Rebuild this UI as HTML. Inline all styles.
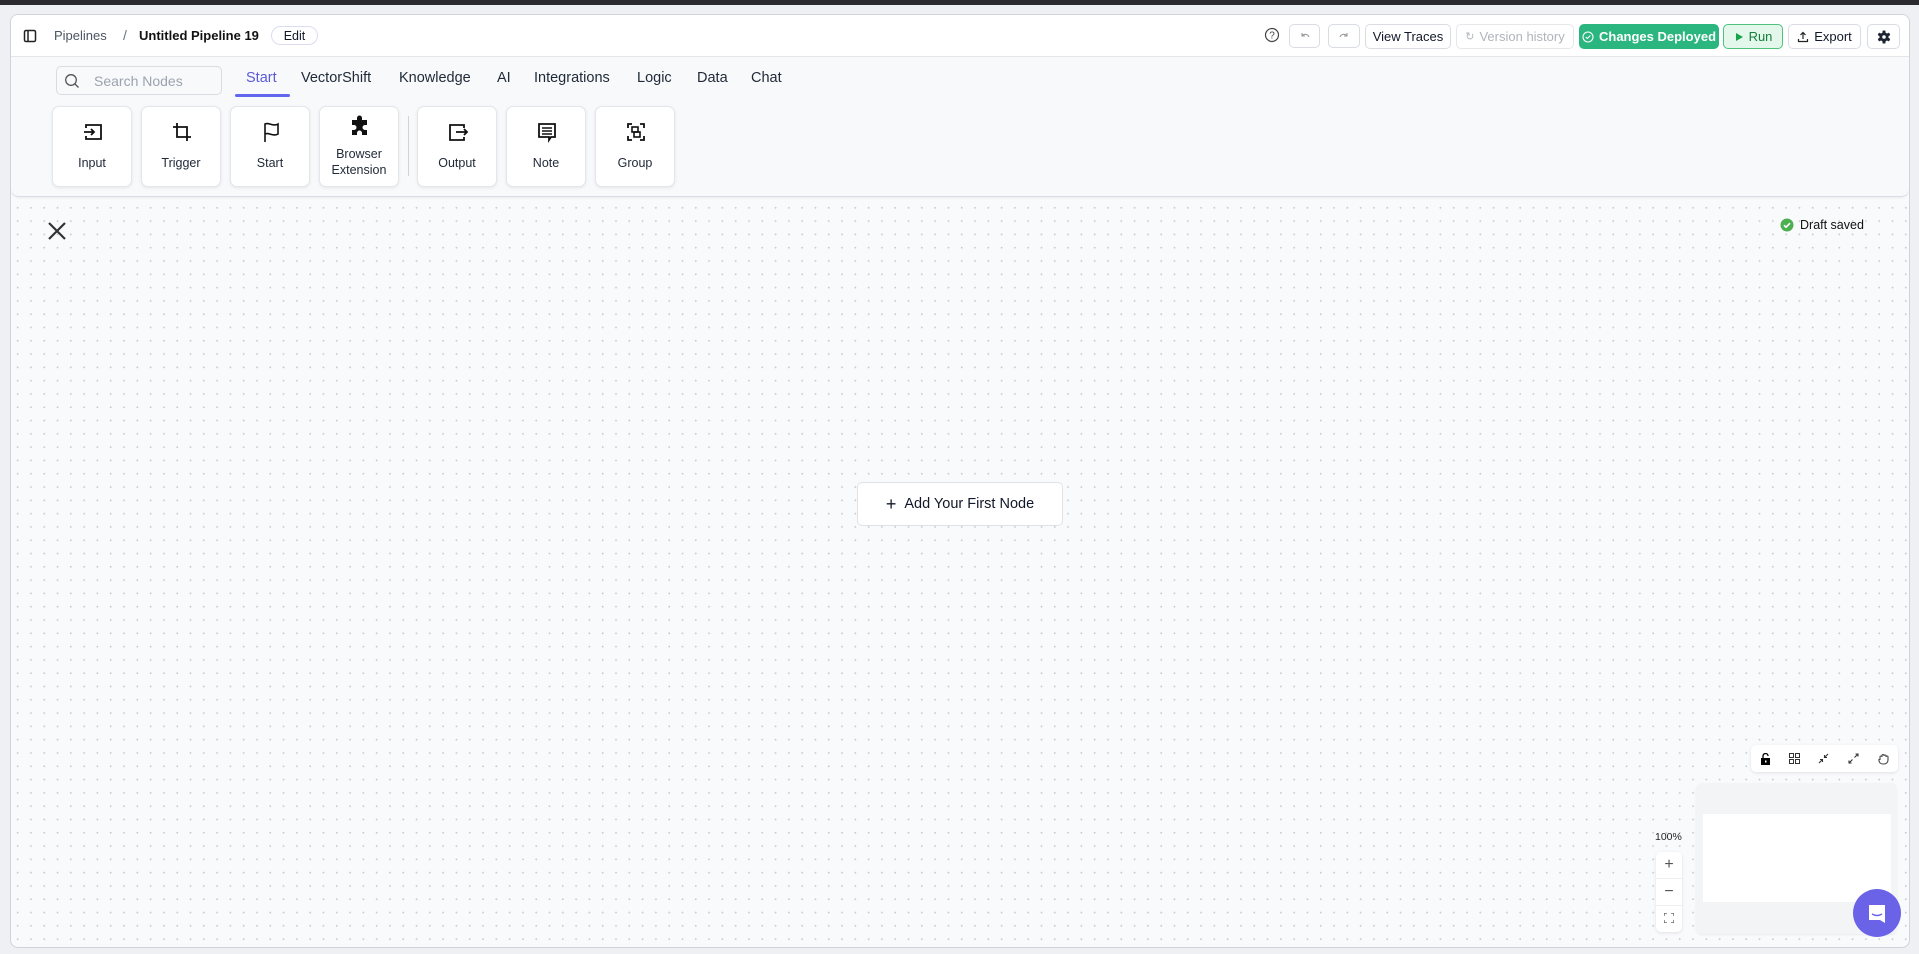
<!DOCTYPE html>
<html><head><meta charset="utf-8"><style>
*{box-sizing:border-box;margin:0;padding:0}
body{width:1919px;height:954px;background:#eef0f3;font-family:"Liberation Sans",sans-serif;color:#111827;position:relative;overflow:hidden;font-size:13px}
.top{position:absolute;left:0;top:0;width:1919px;height:5px;background:#2b2b2f}
.panel{position:absolute;left:10px;top:14px;width:1900px;height:934px;border:1px solid #cfd4dc;border-radius:8px;background-color:#f9fafb;background-image:radial-gradient(#c9ccd2 0.9px,transparent 1.1px);background-size:13.3px 13.3px;overflow:hidden}
.hdr{position:absolute;left:0;top:0;width:100%;height:42px;background:#fff;border-bottom:1px solid #e5e7eb}
.tb{position:absolute;left:0;top:42px;width:100%;height:140px;background:#f8f9fb;border-bottom:1px solid #d9dde3;border-radius:0 0 8px 8px;box-shadow:0 1px 2px rgba(0,0,0,.06)}
.a{position:absolute;white-space:nowrap}
.btn{position:absolute;height:24px;border:1px solid #d9dde3;border-radius:5px;background:#fff;font-size:13px;display:flex;align-items:center;justify-content:center;gap:5px}
.tab{position:absolute;top:13px;font-size:14.5px;color:#1f2937}
.tile{position:absolute;top:49px;width:80px;height:81px;background:#fff;border:1px solid #e3e6ea;border-radius:7px;box-shadow:0 1px 3px rgba(0,0,0,.08);text-align:center;font-size:12.5px;color:#1f2937}
.tile svg{position:absolute;left:29px;top:14px}
.tile span{position:absolute;left:0;right:0;top:48px;line-height:16px}
</style></head><body>
<div class="top"></div>
<div class="panel">
 <div class="hdr">
  <svg class="a" style="left:12px;top:14px" width="14" height="14" viewBox="0 0 14 14"><rect x="1.5" y="1.5" width="11" height="11" rx="1.5" fill="none" stroke="#222" stroke-width="1.5"/><line x1="5" y1="2" x2="5" y2="12" stroke="#222" stroke-width="1.5"/></svg>
  <div class="a" style="left:43px;top:13px;font-size:13px;color:#4b5563">Pipelines</div>
  <div class="a" style="left:112px;top:12px;font-size:14px;color:#6b7280">/</div>
  <div class="a" style="left:128px;top:13px;font-size:13px;font-weight:bold;color:#111">Untitled Pipeline 19</div>
  <div class="btn" style="left:260px;top:11px;width:47px;height:19px;border-radius:10px;border-color:#dcdcf0;font-size:12.5px">Edit</div>
  <svg class="a" style="left:1253px;top:12px" width="16" height="16" viewBox="0 0 16 16"><circle cx="8" cy="8" r="6.5" fill="none" stroke="#444" stroke-width="1.2"/><text x="8" y="11.5" font-size="10" text-anchor="middle" fill="#444" font-family="Liberation Sans">?</text></svg>
  <div class="btn" style="left:1278px;top:9px;width:31px;height:24px">
   <svg width="12" height="12" viewBox="0 0 12 12"><path d="M3 3v3h3M3 6a4 4 0 0 1 7 1" fill="none" stroke="#999" stroke-width="1.1"/></svg></div>
  <div class="btn" style="left:1317px;top:9px;width:32px;height:24px">
   <svg width="12" height="12" viewBox="0 0 12 12"><path d="M9 3v3H6M9 6a4 4 0 0 0-7 1" fill="none" stroke="#999" stroke-width="1.1"/></svg></div>
  <div class="btn" style="left:1354px;top:9px;width:86px;height:25px;font-size:13px">View Traces</div>
  <div class="btn" style="left:1445px;top:9px;width:118px;height:25px;color:#b0b4bb;border-color:#e5e7eb"><span style="font-size:11px">↻</span>Version history</div>
  <div class="btn" style="left:1568px;top:9px;width:140px;height:25px;background:#2bb67f;border-color:#2bb67f;color:#fff;font-weight:bold"><svg width="12" height="12" viewBox="0 0 12 12"><circle cx="6" cy="6" r="5" fill="none" stroke="#fff" stroke-width="1.1"/><path d="M3.8 6l1.5 1.5 3-3" fill="none" stroke="#fff" stroke-width="1.1"/></svg>Changes Deployed</div>
  <div class="btn" style="left:1712px;top:9px;width:60px;height:25px;background:#e3f8ea;border-color:#4cc27a;color:#15803d"><svg width="10" height="10" viewBox="0 0 10 10"><path d="M2 1l7 4-7 4z" fill="#16a34a"/></svg>Run</div>
  <div class="btn" style="left:1777px;top:9px;width:73px;height:25px"><svg width="12" height="12" viewBox="0 0 12 12"><path d="M6 8V1.5M3.5 4L6 1.5 8.5 4M1.5 8v2.5h9V8" fill="none" stroke="#222" stroke-width="1.2"/></svg>Export</div>
  <div class="btn" style="left:1856px;top:9px;width:33px;height:25px"><svg width="14" height="14" viewBox="0 0 14 14"><g fill="#1f2433"><rect x="5.5" y="0.5" width="3" height="13" rx="0.8"/><rect x="5.5" y="0.5" width="3" height="13" rx="0.8" transform="rotate(60 7 7)"/><rect x="5.5" y="0.5" width="3" height="13" rx="0.8" transform="rotate(120 7 7)"/><circle cx="7" cy="7" r="4.6"/></g><circle cx="7" cy="7" r="1.8" fill="#fff"/></svg></div>
 </div>
 <div class="tb">
  <div class="a" style="left:45px;top:9px;width:166px;height:29px;border:1px solid #d9dde3;border-radius:5px;background:#f8f9fb"></div>
  <svg class="a" style="left:53px;top:16px" width="16" height="16" viewBox="0 0 16 16"><circle cx="7" cy="7" r="5.3" fill="none" stroke="#555" stroke-width="1.3"/><line x1="11" y1="11" x2="14.5" y2="14.5" stroke="#555" stroke-width="1.3"/></svg>
  <div class="a" style="left:83px;top:16px;font-size:14px;color:#9ca3af">Search Nodes</div>
  <div class="tab" style="left:235px;color:#5b5bd6">Start</div>
  <div class="a" style="left:224px;top:37px;width:55px;height:3px;background:#6366f1;border-radius:2px"></div>
  <div class="tab" style="left:290px">VectorShift</div>
  <div class="tab" style="left:388px">Knowledge</div>
  <div class="tab" style="left:486px">AI</div>
  <div class="tab" style="left:523px">Integrations</div>
  <div class="tab" style="left:626px">Logic</div>
  <div class="tab" style="left:686px">Data</div>
  <div class="tab" style="left:740px">Chat</div>
  <div class="tile" style="left:41px"><svg width="22" height="22" viewBox="0 0 22 22"><path d="M4 7V4h15v14H4v-3" fill="none" stroke="#111" stroke-width="1.8"/><path d="M2 11h10M9 8l3 3-3 3" fill="none" stroke="#111" stroke-width="1.8"/></svg><span>Input</span></div>
  <div class="tile" style="left:130px"><svg width="22" height="22" viewBox="0 0 22 22"><path d="M6 2v14h14M2 6h14v14" fill="none" stroke="#111" stroke-width="1.8"/></svg><span>Trigger</span></div>
  <div class="tile" style="left:219px"><svg width="22" height="22" viewBox="0 0 22 22"><path d="M5 21V3c4-2 8 3 13 0v10c-5 3-9-2-13 0" fill="none" stroke="#111" stroke-width="1.6"/></svg><span>Start</span></div>
  <div class="tile" style="left:308px"><svg style="top:8px" width="22" height="22" viewBox="0 0 22 22"><path d="M8 3a2.5 2.5 0 0 1 5 0v2h5v5h-2a2.5 2.5 0 0 0 0 5h2v5h-5v-2a2.5 2.5 0 0 0-5 0v2H3v-5h2a2.5 2.5 0 0 0 0-5H3V5h5z" fill="#111"/></svg><span style="top:39px">Browser<br>Extension</span></div>
  <div class="a" style="left:397px;top:59px;width:1px;height:60px;background:#d1d5db"></div>
  <div class="tile" style="left:406px"><svg width="22" height="22" viewBox="0 0 22 22"><path d="M17 7V4H3v15h14v-3" fill="none" stroke="#111" stroke-width="1.8"/><path d="M9 11h11M17 8l3 3-3 3" fill="none" stroke="#111" stroke-width="1.8"/></svg><span>Output</span></div>
  <div class="tile" style="left:495px"><svg width="22" height="22" viewBox="0 0 22 22"><path d="M3 3h16v13h-4l-2 3v-3H3z" fill="none" stroke="#111" stroke-width="1.8"/><path d="M6 7h10M6 10h10M6 13h10" stroke="#111" stroke-width="1.5"/></svg><span>Note</span></div>
  <div class="tile" style="left:584px"><svg width="22" height="22" viewBox="0 0 22 22"><path d="M3 7V3h4M15 3h4v4M19 15v4h-4M7 19H3v-4" fill="none" stroke="#111" stroke-width="1.8"/><rect x="7" y="6" width="6" height="5" fill="none" stroke="#111" stroke-width="1.6"/><rect x="9" y="11" width="6" height="5" fill="none" stroke="#111" stroke-width="1.6"/></svg><span>Group</span></div>
 </div>
 <svg class="a" style="left:36px;top:206px" width="20" height="20" viewBox="0 0 20 20"><path d="M2 2l16 16M18 2L2 18" stroke="#333" stroke-width="2.2"/></svg>
 <svg class="a" style="left:1769px;top:203px" width="14" height="14" viewBox="0 0 14 14"><circle cx="7" cy="7" r="6.5" fill="#4caf50"/><path d="M4 7.2l2 2 4-4" fill="none" stroke="#fff" stroke-width="1.6"/></svg>
 <div class="a" style="left:1789px;top:203px;font-size:12.5px;color:#111">Draft saved</div>
 <div class="a" style="left:846px;top:467px;width:206px;height:44px;background:#fff;border:1px solid #dfe2e6;border-radius:5px;display:flex;align-items:center;justify-content:center;font-size:14.5px;gap:8px"><span style="font-size:18px;font-weight:300">+</span>Add Your First Node</div>
 <div class="a" style="left:1740px;top:730px;width:147px;height:27px;background:#fff;border-radius:5px;box-shadow:0 1px 3px rgba(0,0,0,.1);display:flex;justify-content:space-around;align-items:center;font-size:11px">
  <svg width="11" height="12" viewBox="0 0 11 12"><path d="M3 5V3a2.5 2.5 0 0 1 5 0" fill="none" stroke="#000" stroke-width="1.3"/><rect x="1" y="5" width="9" height="7" fill="#000"/><rect x="5" y="7.5" width="1.5" height="2" fill="#fff"/></svg>
  <svg width="11" height="11" viewBox="0 0 11 11"><rect x="0.5" y="0.5" width="4" height="4" fill="none" stroke="#333"/><rect x="6.5" y="0.5" width="4" height="4" fill="none" stroke="#333"/><rect x="0.5" y="6.5" width="4" height="4" fill="none" stroke="#333"/><rect x="6.5" y="6.5" width="4" height="4" fill="none" stroke="#333"/></svg>
  <svg width="11" height="11" viewBox="0 0 11 11"><path d="M1 10l3.5-3.5M10 1L6.5 4.5M2 6.5h2.5V9M9 4.5H6.5V2" fill="none" stroke="#333" stroke-width="1.1"/></svg>
  <svg width="11" height="11" viewBox="0 0 11 11"><path d="M1 10l3.5-3.5M10 1L6.5 4.5M1 7.5V10h2.5M10 3.5V1H7.5" fill="none" stroke="#333" stroke-width="1.1"/></svg>
  <svg width="12" height="12" viewBox="0 0 12 12"><path d="M3 7V4a1 1 0 0 1 2 0V2.5a1 1 0 0 1 2 0V3a1 1 0 0 1 2 0v1a1 1 0 0 1 2 0v3a4 4 0 0 1-4 4H6A4 4 0 0 1 2 8V6" fill="none" stroke="#444" stroke-width="1.1"/></svg>
 </div>
 <div class="a" style="left:1685px;top:768px;width:201px;height:151px;background:#f3f4f5;border-radius:6px;box-shadow:0 1px 2px rgba(0,0,0,.06)"></div>
 <div class="a" style="left:1692px;top:799px;width:188px;height:88px;background:#fff"></div>
 <div class="a" style="left:1644px;top:816px;font-size:10.5px;color:#222">100%</div>
 <div class="a" style="left:1645px;top:837px;width:26px;height:80px;background:#fff;border-radius:5px;box-shadow:0 1px 3px rgba(0,0,0,.1)">
  <div style="height:27px;border-bottom:1px solid #eee;text-align:center;line-height:26px;font-size:16px;color:#555">+</div>
  <div style="height:27px;border-bottom:1px solid #eee;text-align:center;line-height:26px;font-size:16px;color:#555">−</div>
  <svg style="margin:7px 8px" width="10" height="10" viewBox="0 0 10 10"><path d="M0 3V0h3M7 0h3v3M10 7v3H7M3 10H0V7" fill="none" stroke="#555" stroke-width="1.2"/></svg>
 </div>
 <div class="a" style="left:1842px;top:874px;width:48px;height:48px;border-radius:50%;background:#6a63e8"></div>
 <svg class="a" style="left:1855px;top:887px" width="22" height="22" viewBox="0 0 22 22"><path d="M3 3h16v18l-5-3H3z" fill="#fff"/><path d="M6 12q5 3 10 0" fill="none" stroke="#6a63e8" stroke-width="1.4"/></svg>
</div>
</body></html>
